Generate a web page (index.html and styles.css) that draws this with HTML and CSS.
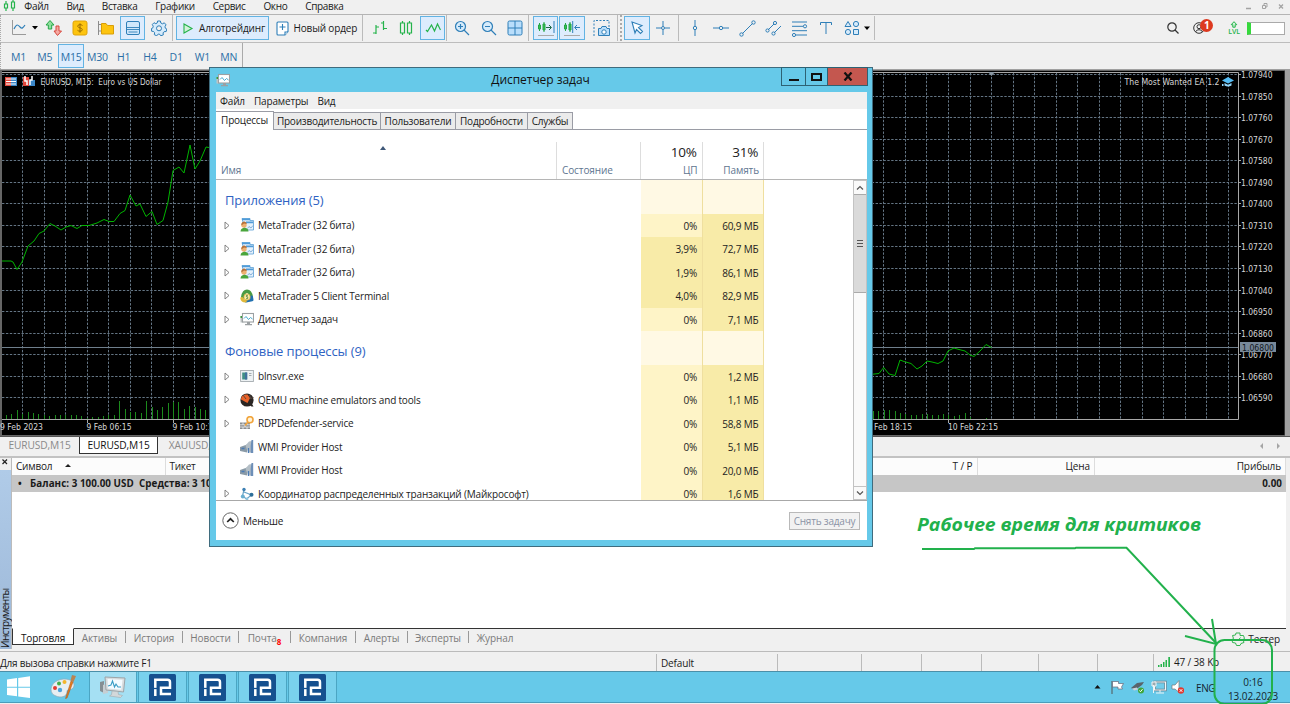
FILE: index.html
```html
<!DOCTYPE html>
<html lang="ru">
<head>
    <meta charset="UTF-8">
    <meta name="viewport" content="width=device-width, initial-scale=1.0">
    <title>MetaTrader 5</title>
    <link rel="stylesheet" href="styles.css">
</head>
<body>

<!-- Общие иконки -->
<svg class="sprite" width="0" height="0">
    <symbol id="i-expert" viewBox="0 0 14 14">
        <path d="M2 .5h8v2h3.500v9.500H5z" fill="#e4f1fc" stroke="#5aa0d6" stroke-width=".8"/>
        <path d="M2 .5h8v1.700H2zM6 3.500h7v1.700H6z" fill="#4f9bd8"/>
        <path d="M7.500 10.500l1.500-2 2 1.500 2-2.500" fill="none" stroke="#6d9fd0" stroke-width=".8"/>
        <path d="M.5 13.500c0-5 8-5 8 0z" fill="#4aa53c"/>
        <circle cx="4" cy="7" r="2.700" fill="#eeb170"/>
        <path d="M1.300 7.500c-.3-5 5-5 5.500-1.500L4 5.500z" fill="#b4703a"/>
    </symbol>
    <symbol id="i-mt5" viewBox="0 0 14 14">
        <path d="M2.800 8C3.500 4 5 2.300 7 2.300S10.500 4 11.200 8" fill="none" stroke="#4b9b43" stroke-width="3.600" stroke-linecap="round"/>
        <path d="M6 12l6-1.300L11.500 8" fill="none" stroke="#2170b0" stroke-width="3" stroke-linecap="round" stroke-linejoin="round"/>
        <path d="M1.800 9.500q.5 2.500 3.500 2.500" fill="none" stroke="#e0b93a" stroke-width="3" stroke-linecap="round"/>
        <circle cx="7" cy="8" r="3.200" fill="#f9edb0" stroke="#d7a726" stroke-width=".7"/>
        <path d="M8 6.300H6.400v1.500H7.700v1.900H6" fill="none" stroke="#55802d" stroke-width=".8"/>
    </symbol>
    <symbol id="i-monitor" viewBox="0 0 14 14">
        <path d="M.5 4h3v6.500h-3z" fill="#bfc4c6"/>
        <rect x="2.500" y="1.500" width="11" height="8.500" fill="#fff" stroke="#9ba0a3" stroke-width="1.100"/>
        <path d="M4 6.500l2-2 2.500 3 2-2 2 1.500" fill="none" stroke="#45a9cf"/>
        <path d="M7 10h3v2h2v1.200H5V12h2z" fill="#9ba0a3"/>
        <rect x=".5" y="4" width="1.500" height="2" fill="#3a9a3a"/>
    </symbol>
    <symbol id="i-exe" viewBox="0 0 14 14">
        <rect x=".6" y="1.500" width="12.800" height="11" fill="#eef2f4" stroke="#a4abaf" stroke-width=".9"/>
        <path d="M2.200 3.500h5v7h-5z" fill="#3f8f86"/><path d="M5 3.500h2.200v7H5z" fill="#40709e"/>
        <path d="M9 4.500h2.500M9 6.500h2.500" stroke="#a4abaf"/>
    </symbol>
    <symbol id="i-qemu" viewBox="0 0 14 14">
        <circle cx="7" cy="7" r="6.600" fill="#2a2523"/>
        <path d="M1 6.500C1 2 5 1 7.500 1.500L10 5 7.500 10z" fill="#e9632b"/>
        <path d="M3 2l3 4M9.500 1.500l1 4 3-1" stroke="#5a4a42" fill="none"/>
        <path d="M8 11l3.500 2.500h2L11.500 10z" fill="#2a2523"/>
    </symbol>
    <symbol id="i-rdp" viewBox="0 0 14 14">
        <path d="M0 6.500h10V13H0z" fill="#8a8d8f"/>
        <path d="M0 8.800h10M0 11h10M3 6.500v2.300M7 6.500v2.300M5 9v2M3 11v2M7 11v2" stroke="#fff" stroke-width=".7"/>
        <circle cx="10" cy="3.700" r="3" fill="#fff3d8" stroke="#f1a43c" stroke-width="1.600"/>
        <path d="M8 6L5 9.500" stroke="#f1a43c" stroke-width="1.700"/>
    </symbol>
    <symbol id="i-wmi" viewBox="0 0 14 14">
        <path d="M0 7l7-2.500v8L0 11z" fill="#8a9aa6"/>
        <path d="M5.500 5.500L9 1.500l3-.5v11.500H8z" fill="#b3bec6"/>
        <path d="M11.500 0h1.700v13h-2.500V6z" fill="#6d8fb8"/>
        <path d="M1.500 8.500h3M8.500 8v5" stroke="#4a7bb5" stroke-width="1.300"/>
    </symbol>
    <symbol id="i-dtc" viewBox="0 0 14 14">
        <path d="M4 2.500L2.500 9l4 3 5-4L4 5" fill="none" stroke="#69a4c8" stroke-width="1.200"/>
        <circle cx="4" cy="2.500" r="1.700" fill="#3c7fb3"/><circle cx="2.800" cy="9.500" r="2" fill="#6aaed0"/>
        <circle cx="11.500" cy="7.800" r="2" fill="#2d6f9a"/><circle cx="7" cy="12" r="1.400" fill="#8fc4de"/>
    </symbol>
    <symbol id="i-robo" viewBox="0 0 27 27">
        <rect width="27" height="27" rx="1.500" fill="#15508f"/>
        <path d="M6.300 22V5.700H18.500Q21 5.700 21 8.200V13.800H12V20H22" fill="none" stroke="#fff" stroke-width="2.500"/>
        <path d="M4.800 14.500h3.500" stroke="#15508f" stroke-width="1.300"/>
    </symbol>
</svg>

<div class="terminal">

    <!-- Главное меню -->
    <div class="menubar">
        <svg class="logo" width="14" height="12" fill="none" stroke="#25b34b" stroke-width="1.200"><path d="M4 1v3M4 8v3M11 0v2M11 8v3M2.500 4h3v4h-3zM9.500 2h3v6h-3z"/></svg>
        <span>Файл</span><span>Вид</span><span>Вставка</span><span>Графики</span><span>Сервис</span><span>Окно</span><span>Справка</span>
        <svg class="mdi" width="42" height="12" fill="none" stroke="#a3a3a3"><path d="M1 8.500h5" stroke-width="1.500"/><path d="M17.500 5.500h3v3h-3zM19 5V3.500h3V7H21"/><path d="M34 4.500l4 4M38 4.500l-4 4" stroke-width="1.300"/></svg>
    </div>

    <!-- Панель инструментов -->
    <div class="toolbar">
        <div class="tool tool-menu">
            <svg width="29" height="18" fill="none" stroke="#2f7fb8"><path d="M1.500 1v14.500H15" stroke="#9a9a9a"/><path d="M3 10c3-6 4-4 6-2s3 1 5-2" stroke-width="1.200"/><path d="M21 7h6l-3 3.500z" fill="#000" stroke="none"/></svg>
        </div>
        <div class="tool"><svg width="18" height="18"><path d="M5 1.500L9 6H6.700v4H3.300V6H1z" fill="#8fe09e" stroke="#25a645"/><path d="M12.500 16.500L9 12h2V7h3v5h2.500z" fill="#f4a9a2" stroke="#d8463c"/></svg></div>
        <div class="tool"><svg width="16" height="16"><rect x="1" y="1" width="14" height="14" rx="2" fill="#fdc40f" stroke="#e0a408"/><path d="M10.500 5.500C9 4 5.500 4.500 5.700 6.300 6 8.300 10.300 7.500 10.300 9.700 10.300 11.700 6.500 11.500 5.500 10.300M8 3.300v9.400" fill="none" stroke="#9a6c00"/></svg></div>
        <div class="tool"><svg width="18" height="16"><path d="M1.500 1v14M1.500 4.500H5M1.500 11H5" stroke="#8c8c8c"/><path d="M4.500 3.500H9l1.500 2h6V14h-12z" fill="#fdc40f" stroke="#d99e07"/></svg></div>
        <div class="tool active"><svg width="16" height="16" fill="#cfe7fb" stroke="#2f7fb8"><rect x="1.500" y="1.500" width="13" height="13" rx="1.500"/><path d="M1.500 7.500h13M1.500 9.500h13M3.500 12h9" stroke-width=".9"/></svg></div>
        <div class="tool"><svg width="16" height="16" fill="#d6ebfb" stroke="#2f7fb8"><path d="M6.600 1h2.800l.4 2 1.700.8 1.800-1 1.700 2-1 1.900.3 1.500 1.500.8-.6 2.500-2.100.2-1 1.200.2 2-2.600.9L8.400 14H7.300l-1.500 1.800-2.500-1.100.3-2-1-1.200-2-.3L.500 8.500 2 7.700l.2-1.500L1.300 4.500 3 2.700l1.800 1L6.200 3z"/><circle cx="8" cy="8.300" r="2.500" fill="#f0f0f0"/></svg></div>
        <i class="sep"></i>
        <div class="tool-button algo"><svg width="12" height="13"><path d="M2 2v9l8-4.500z" fill="#d3f3da" stroke="#25b34b" stroke-width="1.100"/></svg>Алготрейдинг</div>
        <div class="tool-button order"><svg width="13" height="15" fill="#fff" stroke="#2f7fb8" stroke-width="1.100"><path d="M2 1h9q1 0 1 1v8.500L9 14H2q-1 0-1-1V2q0-1 1-1z"/><path d="M6.500 3v6M3.500 6h6M9 14v-3h3"/></svg>Новый ордер</div>
        <i class="sep"></i>
        <div class="tool"><svg width="16" height="16" fill="none" stroke="#25b34b" stroke-width="1.200"><path d="M4 5v9M1 13h3M4 7h3M11.500 1v9M9 3h2.500M11.500 8.500H15"/></svg></div>
        <div class="tool"><svg width="14" height="16" fill="none" stroke="#25b34b" stroke-width="1.200"><path d="M3.500 1v2M3.500 13v2M10.500 1v2M10.500 13v2M1.500 3h4v10h-4zM8.500 3h4v10h-4z"/></svg></div>
        <div class="tool active"><svg width="16" height="14" fill="none" stroke="#25b34b" stroke-width="1.200"><path d="M1 9l1.500 1.500 4-6.500 3 6 3-7 3 6"/></svg></div>
        <i class="sep short"></i>
        <div class="tool"><svg width="16" height="16" fill="#d6ebfb" stroke="#2f7fb8" stroke-width="1.200"><circle cx="6.500" cy="6.500" r="5"/><path d="M10 10l5 5M4 6.500h5M6.500 4v5"/></svg></div>
        <div class="tool"><svg width="16" height="16" fill="#d6ebfb" stroke="#2f7fb8" stroke-width="1.200"><circle cx="6.500" cy="6.500" r="5"/><path d="M10 10l5 5M4 6.500h5"/></svg></div>
        <div class="tool"><svg width="16" height="16" fill="#b9defb" stroke="#2f7fb8"><rect x="1" y="1" width="14" height="14" rx="1.500"/><path d="M8 1v14M1 8h14"/></svg></div>
        <i class="sep"></i>
        <div class="tool active"><svg width="18" height="18" fill="#35c053" stroke="#25a645"><path d="M2.500 4v8M7 3v10" /><path d="M1.500 6h2v4h-2zM6 5h2v6H6z"/><path d="M9 8.500h5M12 6l2.500 2.500L12 11" fill="none" stroke="#1e6a48"/><path d="M17 2v12" stroke="#2f7fb8"/><path d="M1 16.500h16" stroke="#a9a9a9"/></svg></div>
        <div class="tool active"><svg width="18" height="18" fill="#35c053" stroke="#25a645"><path d="M2.500 4v8M7 3v10"/><path d="M1.500 6h2v4h-2zM6 5h2v6H6z"/><path d="M17 8.500h-5M14 6l-2.500 2.500L14 11M9.700 2v12" fill="none" stroke="#2f7fb8"/><path d="M1 16.500h16" stroke="#a9a9a9"/></svg></div>
        <i class="gap"></i>
        <div class="tool"><svg width="18" height="18" fill="none" stroke="#2f7fb8"><path d="M1 17V1.500h15V8" stroke-dasharray="2 1.500"/><path d="M5.500 9.500h2.500l1-2h4l1 2h2.500v7h-11z" fill="#b9defb"/><circle cx="11" cy="13" r="2.200" fill="#fff"/></svg></div>
        <i class="sep grip"></i>
        <div class="tool active"><svg width="14" height="14"><path d="M2 1l10 3.500L8.500 6.500l4 4-2 2-4-4L5 12z" fill="#fff" stroke="#2f7fb8" stroke-width="1.100"/></svg></div>
        <div class="tool"><svg width="16" height="16" fill="none" stroke="#2f7fb8"><path d="M8 1v5M8 10v5M1 8h5M10 8h5"/><circle cx="8" cy="8" r="1.500"/></svg></div>
        <i class="sep mid"></i>
        <div class="tool"><svg width="16" height="16" fill="none" stroke="#2f7fb8"><path d="M8 0v6M8 10v6"/><circle cx="8" cy="8" r="1.700"/></svg></div>
        <div class="tool"><svg width="16" height="16" fill="none" stroke="#2f7fb8"><path d="M0 8h6M10 8h6"/><circle cx="8" cy="8" r="1.700"/></svg></div>
        <div class="tool"><svg width="17" height="17" fill="none" stroke="#2f7fb8"><path d="M3.500 13.500l10-10"/><circle cx="2.500" cy="14.500" r="1.700"/><circle cx="14.500" cy="2.500" r="1.700"/></svg></div>
        <div class="tool"><svg width="17" height="17" fill="none" stroke="#2f7fb8"><path d="M3 10l6-6M9 13l7-7"/><circle cx="2.500" cy="10.500" r="1.600"/><circle cx="10" cy="3" r="1.600"/><circle cx="8.500" cy="13.500" r="1.600"/></svg></div>
        <div class="tool"><svg width="17" height="17" fill="none" stroke="#2f7fb8"><path d="M1 2h15M1 6.300h11M1 10.700h15M5 15h11"/><circle cx="14" cy="6.300" r="1.600"/><circle cx="3" cy="15" r="1.600"/></svg></div>
        <div class="tool"><svg width="14" height="14" fill="none" stroke="#2f7fb8"><path d="M1.500 4V1.500h11V4M7 1.500v11.500"/></svg></div>
        <div class="tool tool-shapes">
            <svg width="32" height="16" fill="#d6ebfb" stroke="#2f7fb8"><path d="M4 1.500l3 5H1z"/><circle cx="12" cy="4" r="2.600"/><circle cx="4" cy="12" r="2.600"/><path d="M9.500 9.500h5v5h-5z"/><path d="M20 6.500h6l-3 3.500z" fill="#000" stroke="none"/></svg>
        </div>
        <div class="account">
            <svg class="search" width="12" height="12" fill="none" stroke="#333" stroke-width="1.200"><circle cx="5" cy="5" r="4.200"/><path d="M8 8l3.500 3.500"/></svg>
            <div class="user">
                <svg width="12" height="12" fill="none" stroke="#333"><circle cx="6" cy="6" r="5.300"/><circle cx="6" cy="4.700" r="2"/><path d="M2.500 10c1-3 6-3 7 0"/></svg>
                <b class="badge">1</b>
            </div>
            <div class="level"><svg width="8" height="7"><path d="M4 .7l2.800 3H5.200v2.500H2.800V3.700H1.200z" fill="#d3f3da" stroke="#25b34b"/></svg>LVL</div>
            <div class="battery"></div>
        </div>
    </div>

    <!-- Таймфреймы -->
    <div class="timeframes">
        <span>M1</span><span>M5</span><span class="active">M15</span><span>M30</span><span>H1</span><span>H4</span><span>D1</span><span>W1</span><span>MN</span>
    </div>

    <!-- График, рисуется скриптом внизу -->
    <div class="chart"><svg id="chart" width="1290" height="367" viewBox="0 69 1290 367"></svg></div>

    <div class="chart-tabs">
        <span>EURUSD,M15</span><span class="active">EURUSD,M15</span><span>XAUUSD,M15</span>
        <svg width="24" height="8" fill="#a5a5a5"><path d="M4 1v6L1 4zM18 1v6l3-3z"/></svg>
    </div>

    <!-- Инструменты -->
    <div class="toolbox">
        <div class="toolbox-side">
            <svg width="8" height="8" stroke="#222" stroke-width="1.200"><path d="M1.500 1.500l4.500 4.500M6 1.500L1.500 6"/></svg>
            <div class="side-title"><span>Инструменты</span></div>
        </div>
        <div class="toolbox-main">
            <div class="grid-head">
                <span class="c-symbol">Символ<i></i></span><span class="c-ticket">Тикет</span><span class="c-tp">T / P</span><span class="c-price">Цена</span><span class="c-profit">Прибыль</span>
            </div>
            <div class="balance"><span class="dot">•</span><span>Баланс: 3 100.00 USD&nbsp; Средства: 3 100.00</span><span class="total">0.00</span></div>
            <div class="blank"></div>
            <div class="tabs">
                <span class="active">Торговля</span>
                <span class="t1">Активы</span><span class="t2">История</span><span class="t3">Новости</span><span class="t4">Почта<sub>8</sub></span><span class="t5">Компания</span><span class="t6">Алерты</span><span class="t7">Эксперты</span><span class="t8">Журнал</span>
                <div class="tester"><svg width="14" height="14" fill="none" stroke="#35b552"><path d="M5 1h4v2.500h3.500l1 3-1.500 1 1 3-3 1-1 2H5.500l-1-2.500-3-.5-.5-3 1.500-1-1-3L4.500 3z"/><path d="M4.500 7l2 2 3-3.500"/></svg>Тестер</div>
            </div>
        </div>
    </div>

    <!-- Строка состояния -->
    <div class="status">
        <span class="help">Для вызова справки нажмите F1</span><span class="profile">Default</span><span class="st-date"></span><span class="st-open"></span><span class="st-high"></span><span class="st-low"></span><span class="st-close"></span><span class="st-vol"></span>
        <span class="net"><svg width="13" height="10" fill="#25b34b"><path d="M0 8h1.500v2H0zM2.500 7H4v3H2.500zM5 5h1.500v5H5zM7.500 3H9v7H7.500zM10.300 0h1.700v10h-1.700z"/></svg>47 / 38 Kb</span>
    </div>

    <!-- Панель задач Windows -->
    <div class="taskbar">
        <div class="start"><svg width="23" height="22" fill="#fff"><path d="M0 3.500l10-1.400v8.600H0zM11.200 2L23 .3v10.400H11.200zM0 11.700h10v8.600L0 19zM11.200 11.700H23V22l-11.800-1.600z"/></svg></div>
        <div class="paint">
            <svg width="26" height="26"><path d="M1 15C2 7 12 3 20 6c5 2 5 7 2 9-3 1-5 0-5 3 0 5-7 6-11 4-3-1-5-3-5-7z" fill="#e8eef2" stroke="#8ca9b8" stroke-width=".7"/><circle cx="5" cy="14" r="2" fill="#e23b34"/><circle cx="9" cy="9.500" r="2" fill="#43ae49"/><circle cx="14.500" cy="8" r="2" fill="#f3b52b"/><circle cx="10" cy="16" r="2.200" fill="#4ea3dd"/><path d="M21 7l2 1-6 16-1.500.5z" fill="#e57a1f" stroke="#a95414" stroke-width=".5"/><path d="M20.500 6.500L22 1l4 1-2.500 6z" fill="#b98453"/></svg>
        </div>
        <div class="task current">
            <svg width="26" height="24"><path d="M0 7l4-1v12l-4-2z" fill="#858e93"/><path d="M3 10l5-2v10l-5 1z" fill="#c7ced2"/><path d="M5 2l20 1-1.500 14L6 15z" fill="#d9dddf" stroke="#9ca4a8"/><path d="M7.500 4l15 .8-1.200 10L8 13.500z" fill="#f4fbff"/><path d="M8 11l3-1 1.500-4 2 6 1.500-3 2 3 3 0" fill="none" stroke="#3b9cc4" stroke-width="1.100"/><path d="M12 16l6 .5.500 3 4 1-2 2-11-1.500 2-1.500z" fill="#d3d8da" stroke="#a3a9ac" stroke-width=".6"/></svg>
        </div>
        <div class="task"><svg width="27" height="27"><use href="#i-robo"/></svg></div>
        <div class="task"><svg width="27" height="27"><use href="#i-robo"/></svg></div>
        <div class="task"><svg width="27" height="27"><use href="#i-robo"/></svg></div>
        <div class="task"><svg width="27" height="27"><use href="#i-robo"/></svg></div>
        <div class="tray">
            <svg width="90" height="16">
                <path d="M.500 9.500h6L3.500 6z" fill="#111"/>
                <path d="M18 2v13" stroke="#555"/><path d="M18.500 2.500h6v2h5l-2 3.500 1 2h-4.500v-2h-5.500z" fill="#fff" stroke="#667" stroke-width=".7"/>
                <path d="M37 9l6-5 7-1-2 3-7 5z" fill="#59646b"/><path d="M38 9.500l5-1 1 2-4 1z" fill="#c9d3d8"/><circle cx="47" cy="11.500" r="3" fill="#3fa63b"/><path d="M45.500 11.500l1 1.200 2-2.500" stroke="#fff" fill="none"/>
                <path d="M60.500 3h11v8h-11z" fill="#73cdea" stroke="#607b88" stroke-width="2.400"/><path d="M60.500 3h11v8h-11z" fill="none" stroke="#f4f8fa" stroke-width="1.200"/><path d="M66 11v2.500M62 14h8M59.500 6v8M58 3h4v4h-4z" fill="#9aa9b0" stroke="#eef4f6"/>
                <path d="M78 6h3l4-4.500v12L81 10h-3z" fill="#fff" stroke="#777" stroke-width=".7"/><circle cx="87" cy="11.500" r="3.200" fill="#e2382e"/><path d="M85.700 10.200l2.600 2.600M88.300 10.200l-2.600 2.600" stroke="#fff"/>
            </svg>
            <span class="lang">ENG</span>
            <div class="clock"><span>0:16</span><span>13.02.2023</span></div>
        </div>
    </div>
</div>

<!-- Окно диспетчера задач -->
<div class="window">
    <div class="titlebar">
        <svg width="14" height="14"><use href="#i-monitor"/></svg>
        <span class="title">Диспетчер задач</span>
        <div class="controls">
            <span class="min"><i></i></span><span class="max"><i></i></span>
            <span class="x"><svg width="10" height="9" stroke="#111" stroke-width="2.200"><path d="M1.500 .5l7 8M8.500 .5l-7 8"/></svg></span>
        </div>
    </div>
    <div class="client">
        <div class="win-menu"><span>Файл</span><span>Параметры</span><span>Вид</span></div>
        <div class="win-tabs"><span class="active">Процессы</span><span class="w2">Производительность</span><span class="w3">Пользователи</span><span class="w4">Подробности</span><span class="w5">Службы</span></div>
        <div class="columns">
            <div class="name"><i></i>Имя</div>
            <div class="state">Состояние</div>
            <div class="num"><b>10%</b>ЦП</div>
            <div class="num"><b>31%</b>Память</div>
        </div>
        <div class="list">
            <div class="rows" id="rows"></div>
            <div class="scrollbar">
                <span><svg width="8" height="6"><path d="M1 4.500l3-3 3 3" fill="none" stroke="#555" stroke-width="1.200"/></svg></span>
                <div class="thumb"><i></i><i></i><i></i></div>
                <span class="down"><svg width="8" height="6"><path d="M1 1.500l3 3 3-3" fill="none" stroke="#555" stroke-width="1.200"/></svg></span>
            </div>
        </div>
        <div class="footer">
            <svg width="17" height="17" fill="none"><circle cx="8.500" cy="8.500" r="7.700" stroke="#666"/><path d="M5.200 10l3.300-3.200 3.300 3.200" stroke="#222" stroke-width="1.700"/></svg>
            <span>Меньше</span>
            <button disabled>Снять задачу</button>
        </div>
    </div>
</div>

<!-- Пометки поверх экрана -->
<svg class="notes" width="1290" height="704" fill="none" stroke="#22b14c" stroke-width="2">
    <text x="917" y="530.500" textLength="284" lengthAdjust="spacingAndGlyphs">Рабочее время для критиков</text>
    <path d="M922 549h52l1-.7h100l1-.6h50.500L1217 644"/>
    <path d="M1212 619l4 25-31-8"/>
    <rect x="1214.500" y="640" width="57.500" height="64" rx="10"/>
</svg>

<script>
    // Список процессов: имя, иконка, ЦП, память, есть ли стрелка
    const groups = [
        ['Приложения (5)', [
            ['MetaTrader (32 бита)', 'expert', '0%', '60,9 МБ', true],
            ['MetaTrader (32 бита)', 'expert', '3,9%', '72,7 МБ', true],
            ['MetaTrader (32 бита)', 'expert', '1,9%', '86,1 МБ', true],
            ['MetaTrader 5 Client Terminal', 'mt5', '4,0%', '82,9 МБ', true],
            ['Диспетчер задач', 'monitor', '0%', '7,1 МБ', true]
        ]],
        ['Фоновые процессы (9)', [
            ['blnsvr.exe', 'exe', '0%', '1,2 МБ', true],
            ['QEMU machine emulators and tools', 'qemu', '0%', '1,1 МБ', true],
            ['RDPDefender-service', 'rdp', '0%', '58,8 МБ', true],
            ['WMI Provider Host', 'wmi', '0%', '5,1 МБ', false],
            ['WMI Provider Host', 'wmi', '0%', '20,0 МБ', false],
            ['Координатор распределенных транзакций (Майкрософт)', 'dtc', '0%', '1,6 МБ', true]
        ]]
    ];

    let html = '';
    groups.forEach(([title, items]) => {
        html += `<div class="row group"><div class="cell-name">${title}</div><div class="cell pale"></div><div class="cell pale"></div></div>`;
        items.forEach(([name, icon, cpu, mem, arrow]) => {
            const tri = arrow ? '<path d="M1 1v7l4-3.500z" fill="#fff" stroke="#777" stroke-width=".9"/>' : '';
            html += `<div class="row"><div class="cell-name"><svg class="arrow" width="6" height="9">${tri}</svg>` +
                `<svg class="icon" width="14" height="14"><use href="#i-${icon}"/></svg>${name}</div>` +
                `<div class="cell ${cpu === '0%' ? 'cool' : 'hot'}">${cpu}</div><div class="cell hot">${mem}</div></div>`;
        });
    });
    document.getElementById('rows').innerHTML = html;

    // График EURUSD
    const left = [[2,261],[11,261],[13,262],[17,269.5],[22,262],[28,246],[34,241],[39,233.5],[44,231],[50,223.5],[55,226],[61,230],[66,227],[71,225.5],[77,228.5],[82,225.5],[89,225.5],[97,223],[104,219.5],[109,221.5],[114,221.5],[120,213.5],[125,210.5],[130,195],[136,206],[140,204],[146,216.5],[152,211.5],[157,224.5],[163,220.5],[168,202],[173,170.5],[179,167],[184,173],[190,145],[195,169],[200,161],[206,147],[212,148]];
    const right = [[870,374.5],[879,373.5],[883.7,367.5],[889,374],[895,375.5],[900,360],[904,361.5],[911,363.5],[917,369],[922,366],[927,361],[932,362],[938,363.5],[943,361],[948,351],[954,348],[959,349.5],[965,351],[970,355],[974,356.5],[980,351],[986,344.5],[991.5,347.5]];
    const volLeft = [4,5,9,5,7,6,5,4,3,4,4,4,4,4,3,1,2,2,3,4,4,18,10,7,7,6,18,12,9,12,16,17,17,10,13,12,10,9];
    const volRight = [8,8,9,9,8,6,5,4,4,5,5,4,4,5,4,3,4,6,2,0,0,1];

    // подпись, сжатая под ширину
    const label = (x, y, w, text, cls = '') =>
        `<text x="${x}" y="${y}" textLength="${w}" lengthAdjust="spacingAndGlyphs" xml:space="preserve" class="${cls}">${text}</text>`;

    let s = '<rect x="0" y="69" width="1290" height="367" fill="#a0a0a0"/><rect x="0" y="70" width="1285" height="366" fill="#666"/>' +
        '<rect x="2" y="71" width="1282.500" height="364" fill="#000"/><path d="M2 72.500H1238.500V419.500H2" class="frame"/>';
    for (let i = 0; i < 57; i++) {
        const x = Math.round(22 + i * 21.535) + .5;
        s += `<path d="M${x} 73V419" class="grid"/>`;
    }
    for (let i = 0; i < 16; i++) {
        const y = Math.round(74.300 + i * 21.52) + .5;
        s += `<path d="M2 ${y}H1238" class="grid"/><path d="M1238 ${y}h3" class="frame"/>`;
        s += label(1241, y + 3.500, 31.500, (1.0794 - i * .0009).toFixed(5));
    }
    volLeft.forEach((h, i) => s += `<rect x="${Math.round(6 + i * 5.39)}" y="${419 - h}" width="1" height="${h}" fill="#1c8a1c"/>`);
    volRight.forEach((h, i) => s += `<rect x="${Math.round(873 + i * 5.39)}" y="${419 - h}" width="1" height="${h}" fill="#1c8a1c"/>`);
    s += '<path d="M2 347.500H1238" stroke="#6f7f8c"/>';
    s += `<polyline points="${left.join(' ')}" class="price"/><polyline points="${right.join(' ')}" class="price"/>`;
    s += '<rect x="1240" y="342" width="36" height="10" fill="#778899"/>' + label(1242, 350.5, 32, '1.06800', 'bid');
    s += '<path d="M988 72h7l-3.500 4z" fill="#8b98a3"/><path d="M87.500 419v4M173.500 419v4M948.500 419v4" class="frame"/>';
    s += label(0, 430, 43, '9 Feb 2023') + label(86.5, 430, 45, '9 Feb 06:15') + label(172.5, 430, 45, '9 Feb 10:15');
    s += label(862, 430, 50, '10 Feb 18:15') + label(948, 430, 50, '10 Feb 22:15');
    // заголовок графика
    s += label(40.5, 85, 121, 'EURUSD, M15:  Euro vs US Dollar') + label(1124.5, 85, 95, 'The Most Wanted EA 1.2');
    s += '<path d="M5 77h6v9H5z" fill="#e2483d"/><path d="M11 77h6v9h-6z" fill="#3b87c8"/><path d="M6 79h10M6 81.500h10M6 84h10" stroke="#fff" stroke-width="1.200"/>';
    s += '<path d="M23 77h6v9h-6z" fill="#e2483d"/><path d="M29 80h6v6h-6z" fill="#3b87c8"/><path d="M25 76v5h2v4M32 76v4h-2v5" fill="none" stroke="#fff" stroke-width="1.500"/>';
    s += '<path d="M1222 80.500l6-3.500 6 3.500-6 3z" fill="#55bdf5"/><path d="M1224.500 83v2.500q3.500 2 7 0V83l-3.500 1.800zM1222 84h1.500v2h-1.500z" fill="#8fd5fa"/>';
    document.getElementById('chart').innerHTML = s;
</script>
</body>
</html>
```

FILE: styles.css
```css
* {
    box-sizing: border-box;
}

body {
    margin: 0;
    width: 1290px;
    height: 704px;
    overflow: hidden;
    position: relative;
    background: #f0f0f0;
    font-family: "Open Sans", "Noto Sans", sans-serif;
    font-size: 10px;
    line-height: 14px;
    letter-spacing: -.1px;
    color: #1a1a1a;
    white-space: nowrap;
}

svg {
    display: block;
    flex: none;
}

.sprite {
    position: absolute;
}

.terminal {
    height: 704px;
    display: flex;
    flex-direction: column;
}

/* меню */
.menubar {
    height: 15px;
    display: flex;
    align-items: flex-start;
    gap: 17.8px;
    padding-left: 2px;
    border-bottom: 1px solid #b4b4b4;
    line-height: 12px;
    letter-spacing: -.33px;
}

.menubar .logo {
    margin-right: -9.5px;
}

.menubar .mdi {
    margin-left: auto;
    margin-right: 3px;
}

/* панель инструментов */
.toolbar {
    height: 28px;
    display: flex;
    align-items: center;
    padding: 0 0 1px 5.5px;
    border-left: 1px dotted #aaa;
    border-bottom: 1px solid #bdbdbd;
}

.tool {
    width: 26.3px;
    height: 24px;
    flex: none;
    display: flex;
    align-items: center;
    justify-content: center;
}

.tool.active {
    width: 25.3px;
    margin: 0 .5px;
    background: #ddecfd;
    border: 1px solid #62b3e3;
}

.tool-menu {
    width: 34px;
    justify-content: flex-start;
    padding-left: 4px;
}

.tool-shapes {
    width: 36px;
    justify-content: flex-start;
    padding-left: 5px;
    border-right: 1px solid #bbb;
}

.sep {
    width: 4.5px;
    height: 26px;
    flex: none;
    border-left: 1px solid #bbb;
}

.sep.short {
    width: 3.3px;
}

.sep.mid {
    width: 4px;
    margin-left: 1px;
}

.sep.grip {
    width: 5px;
    margin: 0 2px;
    border-right: 2px dotted #aaa;
}

.gap {
    width: 3.5px;
}

.tool-button {
    width: 93px;
    height: 24px;
    display: flex;
    align-items: center;
    gap: 4.5px;
    padding-left: 5px;
    letter-spacing: -.15px;
}

.algo {
    background: #ddecfd;
    border: 1px solid #62b3e3;
}

.order {
    padding-left: 7px;
    gap: 4px;
}

.account {
    margin-left: auto;
    display: flex;
    align-items: center;
    padding-right: 5px;
}

.user {
    position: relative;
    margin-left: 14px;
}

.badge {
    position: absolute;
    left: 7px;
    top: -3.5px;
    width: 13px;
    height: 13px;
    border-radius: 50%;
    background: #dd3920;
    color: #fff;
    font-size: 10px;
    line-height: 13px;
    text-align: center;
}

.level {
    margin-left: 23px;
    display: flex;
    flex-direction: column;
    align-items: center;
    color: #25b34b;
    font-size: 7px;
    font-weight: 600;
    line-height: 7px;
}

.battery {
    width: 38px;
    height: 13px;
    margin-left: 7px;
    background: #fff;
    border: 1px solid #aaa;
    border-left: 4px solid #35d93c;
}

.timeframes {
    height: 26px;
    width: 243px;
    display: flex;
    align-items: center;
    padding-left: 4.5px;
    border-left: 1px dotted #aaa;
    border-right: 1px solid #aaa;
    color: #2a6ea6;
    font-size: 10.5px;
    letter-spacing: -.2px;
}

.timeframes span {
    width: 26.25px;
    height: 24px;
    line-height: 27px;
    text-align: center;
}

.timeframes .active {
    background: #ddecfd;
    border: 1px solid #62b3e3;
    line-height: 25px;
}

/* график */
.chart {
    height: 367px;
}

.chart text {
    font-family: "DejaVu Sans", sans-serif;
    font-size: 8.8px;
    fill: #d6d6d6;
    letter-spacing: 0;
}

.chart text.bid {
    fill: #10161c;
}

.chart .grid {
    stroke: #647584;
    stroke-dasharray: 2.4 1.5;
}

.chart .frame {
    fill: none;
    stroke: #a8a8a8;
}

.chart .price {
    fill: none;
    stroke: #00b400;
}

.chart-tabs {
    height: 19px;
    display: flex;
    align-items: flex-start;
    border-top: 1px solid #555;
    color: #8a8a8a;
    font-size: 10.2px;
}

.chart-tabs span {
    width: 79px;
    height: 17px;
    line-height: 17px;
    text-align: center;
}

.chart-tabs .active {
    background: #fff;
    border: 1px solid #333;
    border-top: 0;
    color: #111;
}

.chart-tabs span:nth-child(3) {
    width: 84px;
}

.chart-tabs svg {
    margin: 5px 7px 0 auto;
}

/* инструменты */
.toolbox {
    height: 195px;
    display: flex;
    border-top: 2px solid #c2c2c2;
    margin-top: 1px;
    padding-right: 4px;
}

.toolbox-side {
    width: 12px;
    height: 191px;
    display: flex;
    flex-direction: column;
    border-right: 1px solid #bbb;
}

.toolbox-side svg {
    margin: 0 0 4px 1px;
}

.side-title {
    flex: 1;
    background: linear-gradient(#b0cbe8, #9db8d8);
    display: flex;
    align-items: flex-start;
}

.side-title span {
    writing-mode: vertical-rl;
    transform: rotate(180deg);
    height: 178px;
    line-height: 11px;
    letter-spacing: -.6px;
}

.toolbox-main {
    flex: 1;
    display: flex;
    flex-direction: column;
}

.grid-head {
    height: 17px;
    display: flex;
    background: #fcfcfc;
    line-height: 17px;
}

.grid-head span {
    border-right: 1px solid #ddd;
    padding: 0 4px;
    text-align: right;
}

.grid-head .c-symbol {
    width: 153.5px;
    text-align: left;
    letter-spacing: -.2px;
}

.c-symbol i {
    display: inline-block;
    margin-left: 13px;
    vertical-align: 3px;
    border: 3px solid transparent;
    border-top: 0;
    border-bottom-color: #222;
}

.grid-head .c-ticket {
    width: 120px;
    text-align: left;
    letter-spacing: -.3px;
}

.c-tp {
    width: 692px;
}

.c-price {
    width: 117.5px;
}

.c-profit {
    flex: 1;
}

.balance {
    height: 17px;
    display: flex;
    align-items: center;
    background: #c6c6c6;
    font-weight: bold;
    font-size: 9.8px;
    letter-spacing: .05px;
    padding: 0 4px 0 6px;
}

.balance .dot {
    width: 12px;
}

.balance .total {
    margin-left: auto;
}

.blank {
    flex: 1;
    background: #fff;
}

.tabs {
    height: 23px;
    display: flex;
    border-top: 1px solid #333;
    color: #7a7a7a;
    line-height: 17px;
}

.tabs > span {
    height: 12px;
    line-height: 14px;
    margin-top: 2px;
    text-align: center;
    border-right: 1px solid #999;
}

.tabs .active {
    width: 62px;
    height: 17px;
    line-height: 18px;
    margin-top: -1px;
    background: #fff;
    border: 1px solid #333;
    border-top-color: #fff;
    color: #111;
}

.tabs sub {
    color: #f00;
    font-weight: bold;
    font-size: 8px;
    line-height: 0;
}

.t1 { width: 52px; }
.t2 { width: 57px; }
.t3 { width: 56px; }
.t4 { width: 52px; }
.t5 { width: 65px; }
.t6 { width: 52px; }
.t7 { width: 61px; }

.tabs .t8 {
    width: 52px;
    border: 0;
}

.tester {
    margin-left: auto;
    height: 20px;
    display: flex;
    align-items: center;
    gap: 3px;
    color: #222;
    padding-right: 6px;
}

/* статус */
.status {
    height: 20px;
    display: flex;
    align-items: center;
    border-top: 1px solid #bbb;
    padding-top: 1px;
    letter-spacing: -.15px;
}

.status > span {
    height: 17px;
    line-height: 19px;
    padding-left: 4px;
    border-left: 1px solid #bbb;
}

.status .help {
    width: 656px;
    padding: 0;
    border: 0;
    letter-spacing: -.22px;
}

.profile { width: 121px; }
.st-date { width: 84px; }
.st-open { width: 60px; }
.st-high { width: 60px; }
.st-low { width: 57px; }
.st-close { width: 59px; }
.st-vol { width: 56px; }

.net {
    display: flex;
    align-items: center;
    gap: 3px;
}

/* панель задач */
.taskbar {
    height: 32px;
    display: flex;
    background: #66c9e9;
    border-top: 1px solid #4b8fa8;
    border-bottom: 1px solid #4b9dbb;
}

.start {
    width: 37px;
    padding: 4px 0 0 7px;
}

.paint {
    width: 52px;
    padding: 2px 0 0 13px;
}

.task {
    width: 49px;
    margin-right: 1px;
    display: flex;
    justify-content: center;
    align-items: center;
    background: #79d1ed;
    border: solid #4ba5c3;
    border-width: 0 1px;
}

.task.current {
    width: 48px;
    background: #a5e0f3;
}

.tray {
    margin-left: auto;
    display: flex;
    align-items: center;
    color: #13262e;
}

.lang {
    width: 34px;
    padding: 2px 0 0 12px;
    letter-spacing: -.4px;
}

.clock {
    width: 60px;
    margin-left: 5px;
    margin-right: 7px;
    display: flex;
    flex-direction: column;
    text-align: center;
    padding-top: 3px;
}

/* диспетчер задач */
.window {
    position: absolute;
    left: 209px;
    top: 67px;
    width: 664px;
    height: 480px;
    padding: 0 5px 6px 6px;
    display: flex;
    flex-direction: column;
    background: #66c9e9;
    border: 1px solid #3f6c7e;
}

.titlebar {
    height: 24px;
    display: flex;
    align-items: center;
    position: relative;
}

.title {
    width: 621px;
    text-align: center;
    font-size: 12px;
    letter-spacing: -.05px;
    color: #111;
}

.controls {
    position: absolute;
    right: -1px;
    top: -1px;
    height: 19px;
    display: flex;
    border: 1px solid #2d6274;
}

.controls span {
    width: 24px;
    display: flex;
    align-items: center;
    justify-content: center;
    border-right: 1px solid #2d6274;
}

.controls .max {
    width: 22px;
}

.controls .x {
    width: 39px;
    background: #c4574f;
    border: 0;
}

.min i {
    width: 10px;
    height: 2px;
    margin-top: 6px;
    background: #111;
}

.max i {
    width: 11px;
    height: 8px;
    border: 2px solid #111;
}

.client {
    flex: 1;
    display: flex;
    flex-direction: column;
    background: #fff;
}

.win-menu {
    height: 17px;
    display: flex;
    gap: 9px;
    padding-left: 4px;
    line-height: 18px;
    letter-spacing: -.17px;
    background: #f0f0f0;
}

.win-tabs {
    height: 21px;
    display: flex;
    align-items: flex-end;
    border-bottom: 1px solid #9a9ca5;
    letter-spacing: -.22px;
}

.win-tabs span {
    height: 17px;
    line-height: 17px;
    text-align: center;
    background: #ebebeb;
    border: 1px solid #9a9ca5;
    border-width: 1px 1px 0 0;
}

.win-tabs .active {
    width: 58px;
    height: 19px;
    margin-bottom: -1px;
    background: #fff;
}

.w2 { width: 107px; }
.w3 { width: 75px; }
.w4 { width: 72px; }
.w5 { width: 45px; }

.columns {
    height: 50px;
    display: flex;
    align-items: flex-end;
    border-bottom: 1px solid #b5b5b5;
    color: #5e7590;
}

.columns > div {
    height: 37px;
    line-height: 12px;
    padding: 22px 4px 0 5px;
    border-right: 1px solid #ddd;
}

.columns .name {
    width: 341px;
    position: relative;
}

.name i {
    position: absolute;
    left: 164px;
    top: 4px;
    border: 3.5px solid transparent;
    border-top: 0;
    border-bottom: 4px solid #3f5878;
}

.columns .state {
    width: 84px;
}

.columns .num {
    width: 61.5px;
    padding-top: 2px;
    text-align: right;
}

.num b {
    display: block;
    height: 20px;
    line-height: 16px;
    padding-right: 1px;
    font-size: 13.5px;
    font-weight: normal;
    letter-spacing: -.3px;
    color: #222;
}

.list {
    height: 321px;
    display: flex;
    overflow: hidden;
    border-bottom: 1px solid #a8a8a8;
}

.rows {
    flex: 1;
}

.row {
    height: 23.5px;
    display: flex;
    line-height: 24.5px;
    letter-spacing: -.18px;
    color: #222;
}

.row.group {
    height: 33.5px;
}

.cell-name {
    width: 425px;
    display: flex;
    align-items: center;
    padding-left: 8px;
}

.group .cell-name {
    padding: 6px 0 0 9px;
    font-size: 13px;
    letter-spacing: -.1px;
    color: #2f63c3;
}

.cell-name .arrow {
    margin-right: 10px;
}

.cell-name .icon {
    margin-right: 4px;
}

.cell {
    width: 61.5px;
    padding-right: 4.5px;
    text-align: right;
    border-right: 1px solid #efdf9f;
}

.pale { background: #fff9e4; }
.cool { background: #fef4c7; }
.hot { background: #f8eba8; }

.scrollbar {
    width: 14px;
    display: flex;
    flex-direction: column;
    background: #fafafa;
    border: 1px solid #c3c3c3;
}

.scrollbar span {
    height: 13px;
    display: flex;
    align-items: center;
    justify-content: center;
}

.thumb {
    height: 99px;
    display: flex;
    flex-direction: column;
    align-items: center;
    justify-content: center;
    gap: 2px;
    background: #dadada;
    border: solid #aaa;
    border-width: 1px 0;
}

.thumb i {
    width: 6px;
    height: 1px;
    background: #555;
}

.scrollbar .down {
    margin-top: auto;
    border-top: 1px solid #c3c3c3;
}

.footer {
    flex: 1;
    display: flex;
    align-items: center;
    padding: 0 7px 0 6px;
}

.footer span {
    margin-left: 4px;
    letter-spacing: -.2px;
}

.footer button {
    width: 71px;
    height: 18px;
    margin-left: auto;
    padding: 0;
    font: inherit;
    letter-spacing: -.2px;
    color: #8b93a5;
    background: #f2f2f2;
    border: 1px solid #b9b9b9;
}

/* пометки */
.notes {
    position: absolute;
    left: 0;
    top: 0;
}

.notes text {
    font-size: 18.5px;
    font-weight: bold;
    font-style: italic;
    fill: #22b14c;
    stroke: none;
}
```
